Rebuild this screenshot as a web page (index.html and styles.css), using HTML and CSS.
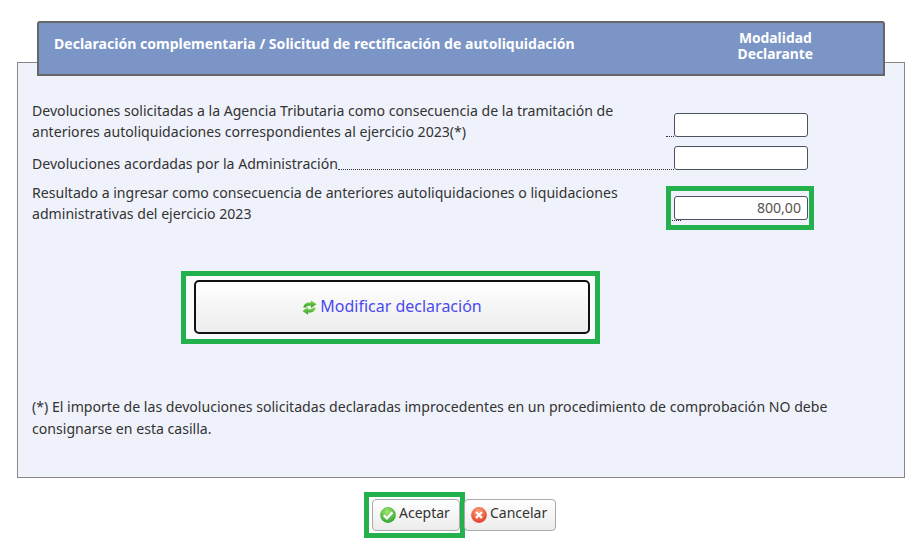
FILE: index.html
```html
<!DOCTYPE html>
<html lang="es">
<head>
  <meta charset="UTF-8">
  <title>Declaración complementaria</title>
  <link rel="stylesheet" href="styles.css">
</head>
<body>
  <div class="page">
    <!-- Cabecera -->
    <div class="panel-header">
      <div class="header-title">Declaración complementaria / Solicitud de rectificación de autoliquidación</div>
      <div class="header-mode">Modalidad<br>Declarante</div>
    </div>

    <div class="panel">
      <div class="row row-first">
        <div class="row-label row-label-wide">Devoluciones solicitadas a la Agencia Tributaria como consecuencia de la tramitación de anteriores autoliquidaciones correspondientes al ejercicio 2023(*)</div>
        <div class="leader"></div>
        <input class="amount" type="text">
      </div>
      <div class="row row-second">
        <div class="row-label">Devoluciones acordadas por la Administración</div>
        <div class="leader"></div>
        <input class="amount" type="text">
      </div>
      <div class="row row-third">
        <div class="row-label row-label-result">Resultado a ingresar como consecuencia de anteriores autoliquidaciones o liquidaciones administrativas del ejercicio 2023</div>
        <div class="mark mark-input">
          <input class="amount" type="text" value="800,00">
          <div class="leader leader-over"></div>
        </div>
      </div>

      <div class="mark mark-modify">
        <button class="btn-modify" type="button">
          <svg class="icon-refresh" viewBox="0 0 16 16" width="15" height="15">
            <defs>
              <linearGradient id="refreshGreen" x1="0" y1="0" x2="0" y2="1">
                <stop offset="0" stop-color="#8fdc5a"/>
                <stop offset="1" stop-color="#2c9a22"/>
              </linearGradient>
            </defs>
            <path d="M1.5 8C1.8 4.6 4.5 2.6 7.6 2.6H9.5V0.3L15.5 4.4 9.5 8.5V6.2H7.8C6 6.2 5 6.8 4.2 8Z" fill="url(#refreshGreen)"/>
            <path d="M14.5 8C14.2 11.4 11.5 13.4 8.4 13.4H6.5V15.7L0.5 11.6 6.5 7.5V9.8H8.2C10 9.8 11 9.2 11.8 8Z" fill="url(#refreshGreen)"/>
          </svg>
          <span class="btn-modify-text">Modificar declaración</span>
        </button>
      </div>

      <p class="note">(*) El importe de las devoluciones solicitadas declaradas improcedentes en un procedimiento de comprobación NO debe consignarse en esta casilla.</p>
    </div>

    <div class="actions">
      <div class="mark mark-accept">
        <button class="btn" type="button">
          <svg class="icon-round" viewBox="0 0 16 16" width="16" height="16">
            <defs>
              <radialGradient id="okGreen" cx="0.45" cy="0.3" r="0.8">
                <stop offset="0" stop-color="#a5e66f"/>
                <stop offset="1" stop-color="#1f9a2b"/>
              </radialGradient>
            </defs>
            <circle cx="8" cy="8" r="7.9" fill="url(#okGreen)"/>
            <path d="M3.8 8.2 6.9 11.4 12.4 5.4" fill="none" stroke="#fff" stroke-width="2.3"/>
          </svg>
          <span class="btn-text">Aceptar</span>
        </button>
      </div>
      <button class="btn btn-cancel" type="button">
        <svg class="icon-round" viewBox="0 0 16 16" width="16" height="16">
          <defs>
            <radialGradient id="koRed" cx="0.45" cy="0.3" r="0.8">
              <stop offset="0" stop-color="#ffa27a"/>
              <stop offset="1" stop-color="#e0301c"/>
            </radialGradient>
          </defs>
          <circle cx="8" cy="8" r="7.9" fill="url(#koRed)"/>
          <path d="M5 5 11 11M11 5 5 11" fill="none" stroke="#fff" stroke-width="2.4"/>
        </svg>
        <span class="btn-text">Cancelar</span>
      </button>
    </div>
  </div>
</body>
</html>
```

FILE: styles.css
```css
* {
  margin: 0;
  padding: 0;
  box-sizing: border-box;
}

html, body {
  height: 543px;
  overflow: hidden;
  background: #fff;
}

body {
  font-family: "Noto Sans", "Open Sans", sans-serif;
  font-size: 14.1px;
  color: #333;
}

.page {
  padding: 21px 18px 0 17px;
}

.panel-header {
  position: relative;
  z-index: 1;
  display: flex;
  justify-content: space-between;
  height: 55px;
  margin: 0 20px -14px;
  padding: 0 70px 0 15px;
  background: #7b95c7;
  border: 2px solid #666;
  border-top-left-radius: 3px;
  border-top-right-radius: 3px;
  color: #fff;
  font-weight: 700;
}

.header-title {
  padding-top: 11px;
  font-size: 14.05px;
}

.header-mode {
  padding-top: 7px;
  font-size: 13.85px;
  text-align: center;
  line-height: 16px;
}

.panel {
  height: 416px;
  padding: 37px 14px 0;
  background: #eff2fa;
  border: 1px solid #888;
}

.row {
  display: flex;
  align-items: flex-end;
  width: 776px;
}

.row-label {
  flex: none;
  line-height: 21px;
}

.row-label-wide,
.row-label-result {
  width: 634px;
}

.row-first {
  height: 42px;
  margin-bottom: 4px;
}

.row-first .leader,
.row-first .amount {
  margin-bottom: 5px;
}

.row-second {
  height: 24px;
  margin-bottom: 16px;
}

.row-second .row-label {
  margin-bottom: -4px;
}

.row-third {
  width: 782px;
  height: 44px;
  align-items: flex-start;
}

.row-third .row-label {
  margin-top: -4px;
}

.leader {
  flex: 1;
  height: 1px;
  border-bottom: 1px dotted #333;
}

.amount {
  flex: none;
  width: 134px;
  height: 24px;
  padding: 0 6px 2px;
  background: #fff;
  border: 1px solid #4a5260;
  border-radius: 3px;
  font: inherit;
  color: #555;
  text-align: right;
}

.mark {
  flex: none;
  border: 5px solid #22b14c;
}

.mark-input {
  position: relative;
  width: 148px;
  height: 44px;
  padding: 5px 0 0 3px;
}

.leader-over {
  position: absolute;
  left: 1px;
  top: 29px;
  width: 9px;
}

.mark-modify {
  width: 419px;
  height: 73px;
  margin: 41px 0 0 149px;
  padding: 4px 5px 0 8px;
  background: #fafbfe;
}

.btn-modify {
  display: flex;
  align-items: center;
  justify-content: center;
  gap: 3px;
  width: 396px;
  height: 54px;
  background: linear-gradient(#fff, #ececec);
  border: 2px solid #111;
  border-radius: 5px;
  font: inherit;
  font-size: 16px;
  color: #4a4aee;
}

.btn-modify-text {
  padding-bottom: 2px;
}

.note {
  width: 840px;
  margin-top: 52px;
  line-height: 22px;
}

.actions {
  display: flex;
  align-items: center;
  margin: 14px 0 0 347px;
}

.mark-accept {
  width: 101px;
  height: 46px;
  padding: 2px 0 0 3px;
}

.btn {
  display: inline-flex;
  align-items: center;
  gap: 3px;
  width: 88px;
  height: 32px;
  padding: 0 0 0 7px;
  background: linear-gradient(#fff, #ececec);
  border: 1px solid #aaa;
  border-radius: 4px;
  font: inherit;
  font-size: 14px;
  color: #333;
}

.btn-text {
  padding-bottom: 5px;
}

.btn-cancel {
  width: 92px;
  margin-left: -1px;
  padding-left: 6px;
}
```
